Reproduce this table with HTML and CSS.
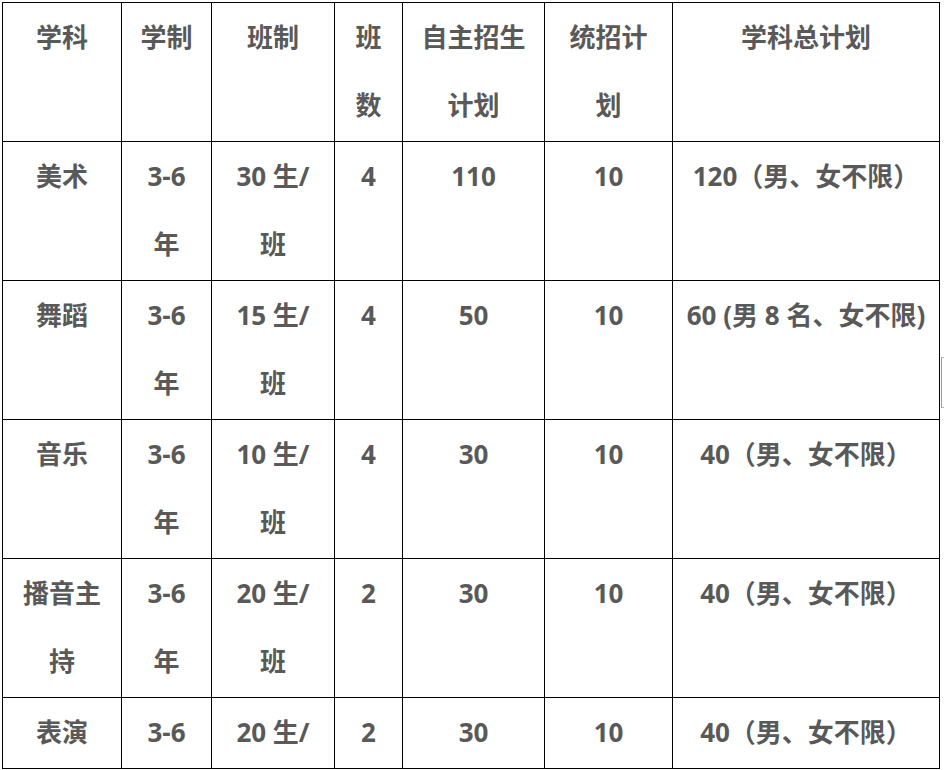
FILE: index.html
```html
<!DOCTYPE html>
<html lang="zh-CN">
<head>
<meta charset="utf-8">
<title>学科招生计划</title>
<link rel="stylesheet" href="styles.css">
</head>
<body>
<div class="page">
  <table class="plan">
    <colgroup>
      <col class="c1"><col class="c2"><col class="c3"><col class="c4"><col class="c5"><col class="c6"><col class="c7">
    </colgroup>
    <tr class="row">
      <td>学科</td>
      <td>学制</td>
      <td>班制</td>
      <td>班<br>数</td>
      <td>自主招生<br>计划</td>
      <td>统招计<br>划</td>
      <td>学科总计划</td>
    </tr>
    <tr class="row">
      <td>美术</td>
      <td>3-6<br>年</td>
      <td>30 生/<br>班</td>
      <td>4</td>
      <td>110</td>
      <td>10</td>
      <td>120（男、女不限）</td>
    </tr>
    <tr class="row">
      <td>舞蹈</td>
      <td>3-6<br>年</td>
      <td>15 生/<br>班</td>
      <td>4</td>
      <td>50</td>
      <td>10</td>
      <td>60 (男 8 名、女不限)</td>
    </tr>
    <tr class="row">
      <td>音乐</td>
      <td>3-6<br>年</td>
      <td>10 生/<br>班</td>
      <td>4</td>
      <td>30</td>
      <td>10</td>
      <td>40（男、女不限）</td>
    </tr>
    <tr class="row">
      <td>播音主<br>持</td>
      <td>3-6<br>年</td>
      <td>20 生/<br>班</td>
      <td>2</td>
      <td>30</td>
      <td>10</td>
      <td>40（男、女不限）</td>
    </tr>
    <tr class="row last">
      <td>表演</td>
      <td>3-6</td>
      <td>20 生/</td>
      <td>2</td>
      <td>30</td>
      <td>10</td>
      <td>40（男、女不限）</td>
    </tr>
  </table>
  <div class="edge-mark"></div>
  <div class="bottom-strip"></div>
</div>
</body>
</html>
```

FILE: styles.css
```css
html, body {
  margin: 0;
  padding: 0;
  background: #ffffff;
}

.page {
  position: relative;
  width: 944px;
  height: 770px;
  overflow: hidden;
  padding-top: 2px;
  box-sizing: border-box;
}

.plan {
  margin-left: 2px;
  width: 937px;
  border-collapse: collapse;
  table-layout: fixed;
  font-family: "Open Sans", "Noto Sans CJK SC", sans-serif;
  font-weight: 700;
  font-size: 26px;
  color: #595959;
}

.c1 { width: 119px; }
.c2 { width: 90px; }
.c3 { width: 123px; }
.c4 { width: 68px; }
.c5 { width: 142px; }
.c6 { width: 128px; }
.c7 { width: 267px; }

.plan td {
  border: 1px solid #000000;
  padding: 0 0 2px 0;
  line-height: 68px;
  text-align: center;
  vertical-align: top;
  white-space: nowrap;
}

.edge-mark {
  position: absolute;
  left: 941px;
  top: 357px;
  width: 3px;
  height: 51px;
  border-left: 1px solid #9a9a9a;
  border-top: 1px solid #b5b5b5;
  border-bottom: 1px solid #b5b5b5;
  box-sizing: border-box;
}

.bottom-strip {
  height: 4px;
  margin-top: 1px;
  background: #ebebeb;
}
```
